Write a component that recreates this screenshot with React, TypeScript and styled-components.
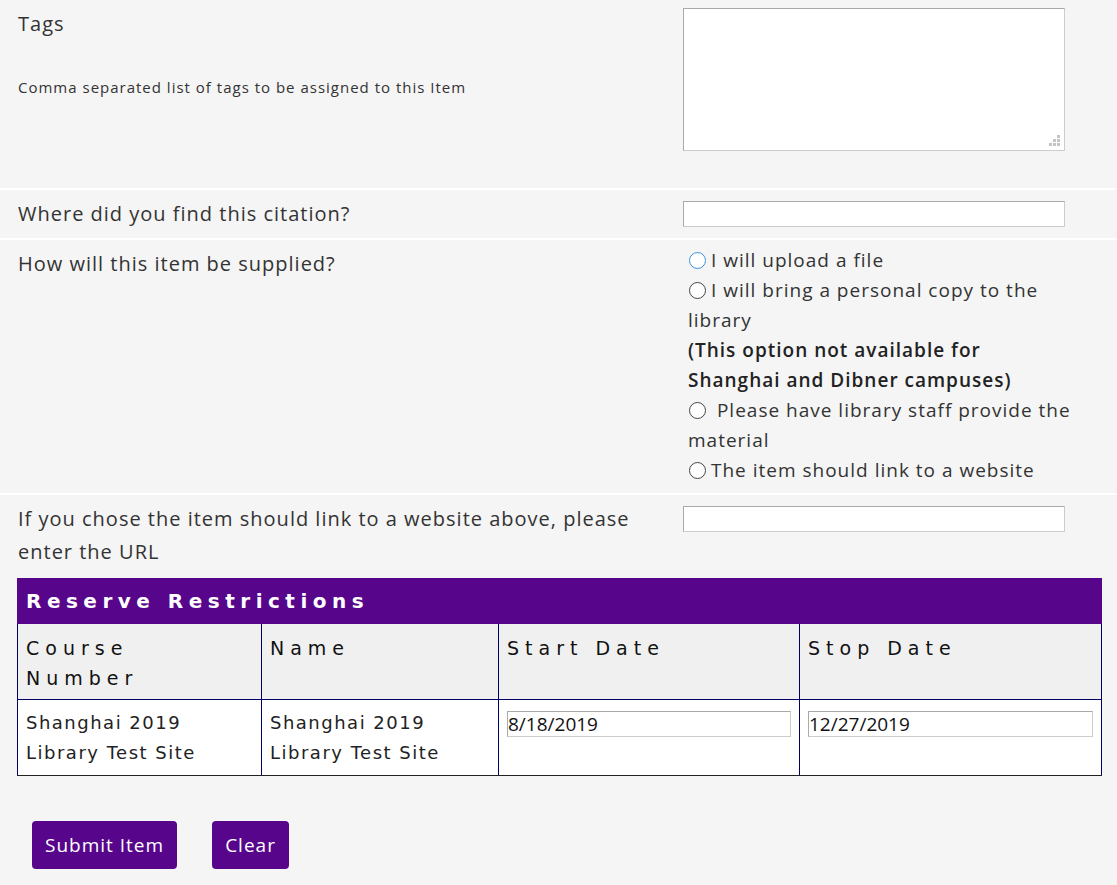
import styled, { createGlobalStyle } from 'styled-components'

const GlobalStyle = createGlobalStyle`
  html, body {
    margin: 0;
    padding: 0;
    background: #f5f5f5;
  }
  body {
    font-family: "Open Sans", "Noto Sans", sans-serif;
    color: #333;
  }
`

const Page = styled.div`
  width: 1117px;
  min-height: 885px;
  background: #f5f5f5;
`

const Row = styled.div<{ $minHeight?: number }>`
  display: grid;
  grid-template-columns: 665px 382px;
  padding: 8px 0 8px 18px;
  min-height: ${p => p.$minHeight ?? 0}px;
  box-sizing: border-box;
  border-bottom: 2px solid #fff;
`

const LastRow = styled(Row)`
  border-bottom: none;
  padding-bottom: 0;
`

const LabelCol = styled.div`
  display: flex;
  flex-direction: column;
  padding-right: 30px;
`

const Label = styled.div`
  font-size: 20px;
  font-weight: 500;
  letter-spacing: 1px;
  line-height: 33px;
  color: #333;
  margin-top: -1px;
`

const Help = styled.div`
  font-size: 15px;
  letter-spacing: 1px;
  line-height: 20px;
  color: #333;
  margin-top: 37px;
`

const AreaWrap = styled.div`
  position: relative;
  width: 382px;
  height: 143px;
`

const TextArea = styled.textarea`
  width: 382px;
  height: 143px;
  box-sizing: border-box;
  border: 1px solid #aaa;
  border-right-color: #ccc;
  border-bottom-color: #ccc;
  background: #fff;
  resize: none;
  margin: 0;
`

const Grip = styled.svg`
  position: absolute;
  right: 5px;
  bottom: 5px;
`

const TextInput = styled.input`
  width: 382px;
  height: 26px;
  box-sizing: border-box;
  border: 1px solid #aaa;
  border-right-color: #ccc;
  border-bottom-color: #ccc;
  background: #fff;
  margin: 3px 0 0;
`

const Options = styled.div`
  display: flex;
  flex-direction: column;
  font-size: 19px;
  letter-spacing: 1px;
  line-height: 30px;
  color: #333;
  width: 392px;
  margin-left: 5px;
  margin-top: -3px;
`

const Option = styled.label`
  display: block;
`

const Radio = styled.input<{ $focus?: boolean }>`
  appearance: none;
  width: 17px;
  height: 17px;
  margin: 0 5px 0 1px;
  border-radius: 50%;
  border: 1.5px solid ${p => (p.$focus ? '#3d8fe0' : '#444')};
  background: #fff;
  vertical-align: -2px;
  box-sizing: border-box;
`

const Note = styled.div`
  font-weight: 600;
  letter-spacing: 1px;
  color: #222;
  max-width: 375px;
`

const TableWrap = styled.div`
  padding: 10px 16px 0 17px;
`

const Table = styled.table`
  width: 1084px;
  border-collapse: collapse;
  font-family: "DejaVu Sans", Verdana, sans-serif;
  table-layout: fixed;
`

const Banner = styled.th`
  background: #57068c;
  color: #fff;
  text-align: left;
  font-size: 20px;
  font-weight: bold;
  letter-spacing: 5.5px;
  height: 44px;
  padding: 0 8px;
  border: 1px solid #57068c;
`

const HeadCell = styled.th`
  background: #f0f0f0;
  color: #111;
  font-weight: normal;
  text-align: left;
  vertical-align: top;
  font-size: 19px;
  letter-spacing: 6px;
  line-height: 30px;
  padding: 9px 16px 5px 8px;
  height: 76px;
  box-sizing: border-box;
  border: 1px solid #000066;
`

const Cell = styled.td`
  background: #fff;
  color: #222;
  vertical-align: top;
  font-size: 18px;
  letter-spacing: 1.5px;
  line-height: 30px;
  padding: 8px 8px 5px;
  height: 76px;
  box-sizing: border-box;
  border: 1px solid #000066;
  border-bottom-color: #222;
`

const DateInput = styled.input`
  width: 100%;
  height: 26px;
  box-sizing: border-box;
  border: 1px solid #aaa;
  border-right-color: #ccc;
  border-bottom-color: #ccc;
  font-family: "Open Sans", sans-serif;
  font-size: 19px;
  color: #111;
  padding: 0;
  margin: 3px 0 0;
`

const Actions = styled.div`
  display: flex;
  gap: 35px;
  padding: 45px 0 0 32px;
`

const Button = styled.button`
  background: #57068c;
  color: #fff;
  border: none;
  border-radius: 4px;
  height: 48px;
  padding: 0 13px;
  font-family: "Open Sans", sans-serif;
  font-size: 19px;
  letter-spacing: 1px;
`

const columns = [
  { title: 'Course Number', width: 244 },
  { title: 'Name', width: 237 },
  { title: 'Start Date', width: 301 },
  { title: 'Stop Date', width: 302 },
]

const gripDots = [
  [8, 0],
  [4, 4],
  [8, 4],
  [0, 8],
  [4, 8],
  [8, 8],
]

export default function App() {
  return (
    <Page>
      <GlobalStyle />
      <Row $minHeight={190}>
        <LabelCol>
          <Label>Tags</Label>
          <Help>Comma separated list of tags to be assigned to this Item</Help>
        </LabelCol>
        <AreaWrap>
          <TextArea />
          <Grip width="11" height="11" viewBox="0 0 11 11">
            {gripDots.map(([x, y]) => (
              <rect key={`${x}-${y}`} x={x} y={y} width="3" height="3" fill="#c4c4c4" />
            ))}
          </Grip>
        </AreaWrap>
      </Row>
      <Row $minHeight={50}>
        <LabelCol>
          <Label>Where did you find this citation?</Label>
        </LabelCol>
        <div>
          <TextInput type="text" />
        </div>
      </Row>
      <Row $minHeight={255}>
        <LabelCol>
          <Label>How will this item be supplied?</Label>
        </LabelCol>
        <Options>
          <Option>
            <Radio type="radio" name="supply" $focus />I will upload a file
          </Option>
          <Option>
            <Radio type="radio" name="supply" />I will bring a personal copy to the library
          </Option>
          <Note>(This option not available for Shanghai and Dibner campuses)</Note>
          <Option>
            <Radio type="radio" name="supply" /> Please have library staff provide the material
          </Option>
          <Option>
            <Radio type="radio" name="supply" />The item should link to a website
          </Option>
        </Options>
      </Row>
      <LastRow>
        <LabelCol>
          <Label>If you chose the item should link to a website above, please enter the URL</Label>
        </LabelCol>
        <div>
          <TextInput type="text" />
        </div>
      </LastRow>

      <TableWrap>
        <Table>
          <colgroup>
            {columns.map(c => (
              <col key={c.title} style={{ width: c.width }} />
            ))}
          </colgroup>
          <thead>
            <tr>
              <Banner colSpan={4}>Reserve Restrictions</Banner>
            </tr>
            <tr>
              {columns.map(c => (
                <HeadCell key={c.title}>{c.title}</HeadCell>
              ))}
            </tr>
          </thead>
          <tbody>
            <tr>
              <Cell>Shanghai 2019 Library Test Site</Cell>
              <Cell>Shanghai 2019 Library Test Site</Cell>
              <Cell>
                <DateInput type="text" defaultValue="8/18/2019" />
              </Cell>
              <Cell>
                <DateInput type="text" defaultValue="12/27/2019" />
              </Cell>
            </tr>
          </tbody>
        </Table>
      </TableWrap>

      <Actions>
        <Button>Submit Item</Button>
        <Button>Clear</Button>
      </Actions>
    </Page>
  )
}
